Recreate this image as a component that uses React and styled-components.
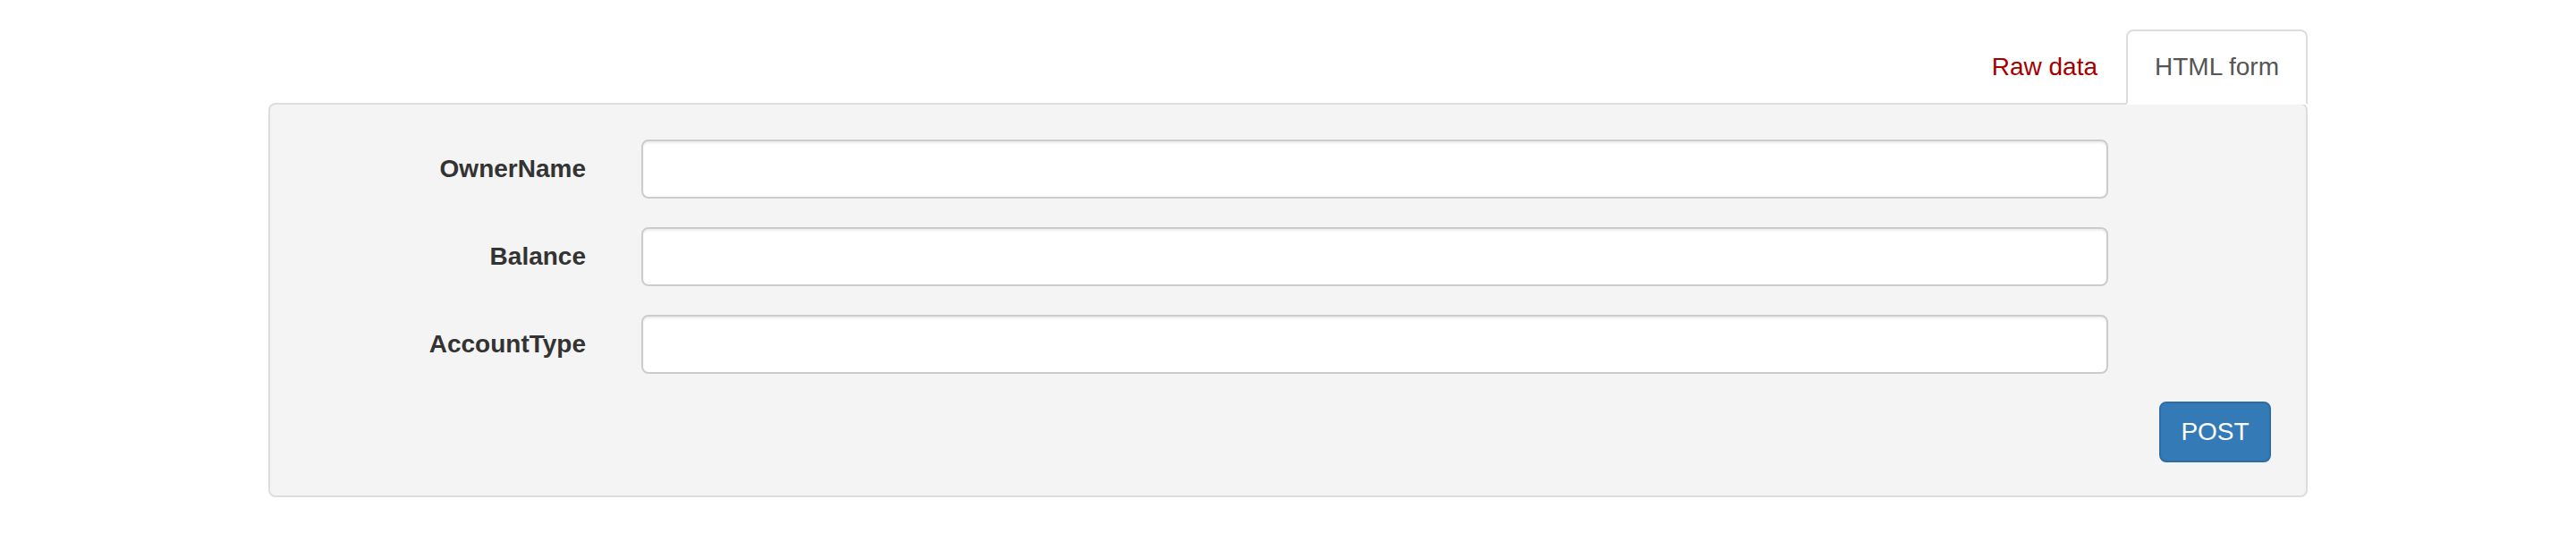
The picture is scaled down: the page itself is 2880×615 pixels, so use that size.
import React from 'react';
import styled, { createGlobalStyle } from 'styled-components';

const fields = ['OwnerName', 'Balance', 'AccountType'];

const App = () => {
  return (
    <>
      <GlobalStyle />
      <Page>
        <Tabs>
          <Tab>Raw data</Tab>
          <Tab active>HTML form</Tab>
        </Tabs>
        <Panel>
          <Form onSubmit={(e) => e.preventDefault()}>
            {fields.map((name) => (
              <Row key={name}>
                <Label htmlFor={name}>{name}</Label>
                <Input id={name} type="text" />
              </Row>
            ))}
            <Actions>
              <Button type="submit">POST</Button>
            </Actions>
          </Form>
        </Panel>
      </Page>
    </>
  );
};

const GlobalStyle = createGlobalStyle`
  html, body {
    margin: 0;
    background: #fff;
    font-family: "Liberation Sans", Arial, Helvetica, sans-serif;
  }
  * {
    box-sizing: border-box;
  }
`;

const Page = styled.div`
  width: 2280px;
  margin: 0 auto;
  padding-top: 33px;
`;

const Tabs = styled.ul`
  display: flex;
  justify-content: flex-end;
  list-style: none;
  margin: 0 0 -2px;
  padding: 0;
  position: relative;
  z-index: 1;
`;

const Tab = styled.li`
  padding: 20px 30px;
  font-size: 28px;
  line-height: 40px;
  border: 2px solid ${(p) => (p.active ? '#ddd' : 'transparent')};
  border-bottom-color: ${(p) => (p.active ? '#fff' : 'transparent')};
  border-radius: 8px 8px 0 0;
  background: ${(p) => (p.active ? '#fff' : 'transparent')};
  color: ${(p) => (p.active ? '#555' : '#a40000')};
  cursor: pointer;
`;

const Panel = styled.div`
  background: #f4f4f4;
  border: 2px solid #ddd;
  border-radius: 8px;
  padding: 39px 39px 37px;
`;

const Form = styled.form`
  display: flex;
  flex-direction: column;
  gap: 32px;
`;

const Row = styled.div`
  display: grid;
  grid-template-columns: 314px 1640px;
  column-gap: 62px;
  align-items: center;
`;

const Label = styled.label`
  text-align: right;
  font-size: 28px;
  font-weight: bold;
  color: #333;
`;

const Input = styled.input`
  height: 66px;
  width: 100%;
  border: 2px solid #ccc;
  border-radius: 8px;
  background: #fff;
  box-shadow: inset 0 2px 2px rgba(0, 0, 0, 0.075);
  padding: 12px 24px;
  font-size: 28px;
  font-family: inherit;
  outline: none;
`;

const Actions = styled.div`
  display: flex;
  justify-content: flex-end;
  margin-top: -1px;
`;

const Button = styled.button`
  width: 125px;
  height: 68px;
  background: #337ab7;
  border: 2px solid #2e6da4;
  border-radius: 8px;
  color: #fff;
  font-size: 28px;
  font-family: inherit;
  cursor: pointer;
`;

export default App;
